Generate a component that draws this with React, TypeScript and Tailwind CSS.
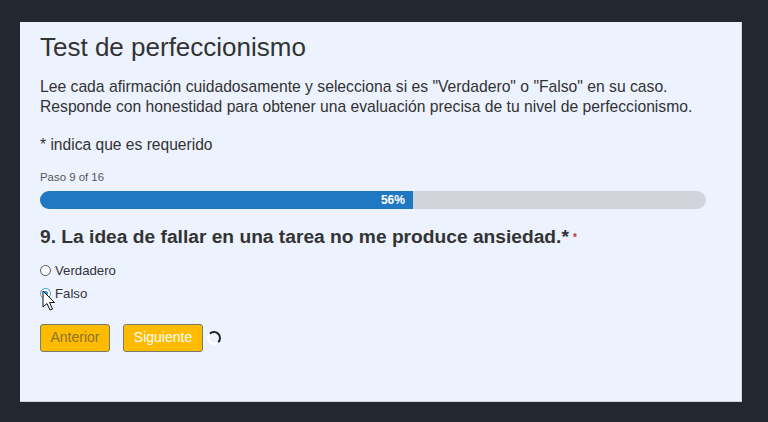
const FONT = { fontFamily: '"Liberation Sans", Arial, sans-serif' };

function Radio({ checked }: { checked?: boolean }) {
  return (
    <span
      className={
        'inline-flex h-[11px] w-[11px] items-center justify-center rounded-full border bg-white ' +
        (checked ? 'border-[#3b9ad9]' : 'border-[#555]')
      }
    >
      {checked && <span className="h-[5px] w-[5px] rounded-full bg-[#2b8fd6]" />}
    </span>
  );
}

function Cursor() {
  return (
    <svg className="absolute left-[42px] top-[290px]" width="14" height="22" viewBox="0 0 14 22">
      <path
        d="M1 1 L1 17 L5 13.5 L8 20 L10.5 19 L7.5 12.5 L12.5 12.5 Z"
        fill="#fff"
        stroke="#111"
        strokeWidth="1"
        strokeLinejoin="round"
      />
    </svg>
  );
}

export default function App() {
  const step = 9;
  const total = 16;
  const pct = 56;

  return (
    <div className="relative h-[422px] w-[768px] overflow-hidden bg-[#232730] pt-[22px] pl-[20px]" style={FONT}>
      <div className="h-[380px] w-[722px] border-r border-b border-[#cfd4dc] bg-[#ecf2fe] px-5 pt-[10px] text-[#333]">
        <h1 className="text-[26px] leading-[30px]">Test de perfeccionismo</h1>
        <p className="mt-[15px] text-[15.7px] leading-[20px]">
          Lee cada afirmación cuidadosamente y selecciona si es "Verdadero" o "Falso" en su caso.
          <br />
          Responde con honestidad para obtener una evaluación precisa de tu nivel de perfeccionismo.
        </p>
        <p className="mt-[18px] text-[15.6px] leading-[20px]">* indica que es requerido</p>

        <div className="mt-[14px] text-[11.4px] leading-[16px] text-[#555]">
          Paso {step} of {total}
        </div>
        <div className="mt-[6px] h-[18px] w-[666px] overflow-hidden rounded-full bg-[#d1d5db]">
          <div
            className="flex h-full items-center justify-end bg-[#1f78c1] pr-2 text-[12px] font-bold text-white"
            style={{ width: `${pct}%` }}
          >
            {pct}%
          </div>
        </div>

        <h3 className="mt-4 text-[19.2px] font-bold leading-[24px]">
          9. La idea de fallar en una tarea no me produce ansiedad.*
          <span className="ml-[4px] align-middle text-[10px] text-[#c0392b]">*</span>
        </h3>

        <div className="mt-[11px] flex flex-col gap-[3px] text-[13.2px]">
          <label className="flex h-[20px] items-center gap-[4px]">
            <Radio />
            <span>Verdadero</span>
          </label>
          <label className="flex h-[20px] items-center gap-[4px]">
            <Radio checked />
            <span>Falso</span>
          </label>
        </div>

        <div className="mt-5 flex items-center">
          <button className="h-[28px] w-[70px] rounded-[3px] border border-[#7a7a6a] bg-[#ffbb00] text-[14px] text-[#8a7433]">
            Anterior
          </button>
          <button className="ml-[13px] h-[28px] w-[80px] rounded-[3px] border border-[#7a7a6a] bg-[#ffbb00] text-[14px] text-white">
            Siguiente
          </button>
          <span className="ml-[4px] h-[14px] w-[14px] rounded-full border-2 border-white border-t-[#222] border-r-[#222]" />
        </div>
      </div>
      <Cursor />
    </div>
  );
}
